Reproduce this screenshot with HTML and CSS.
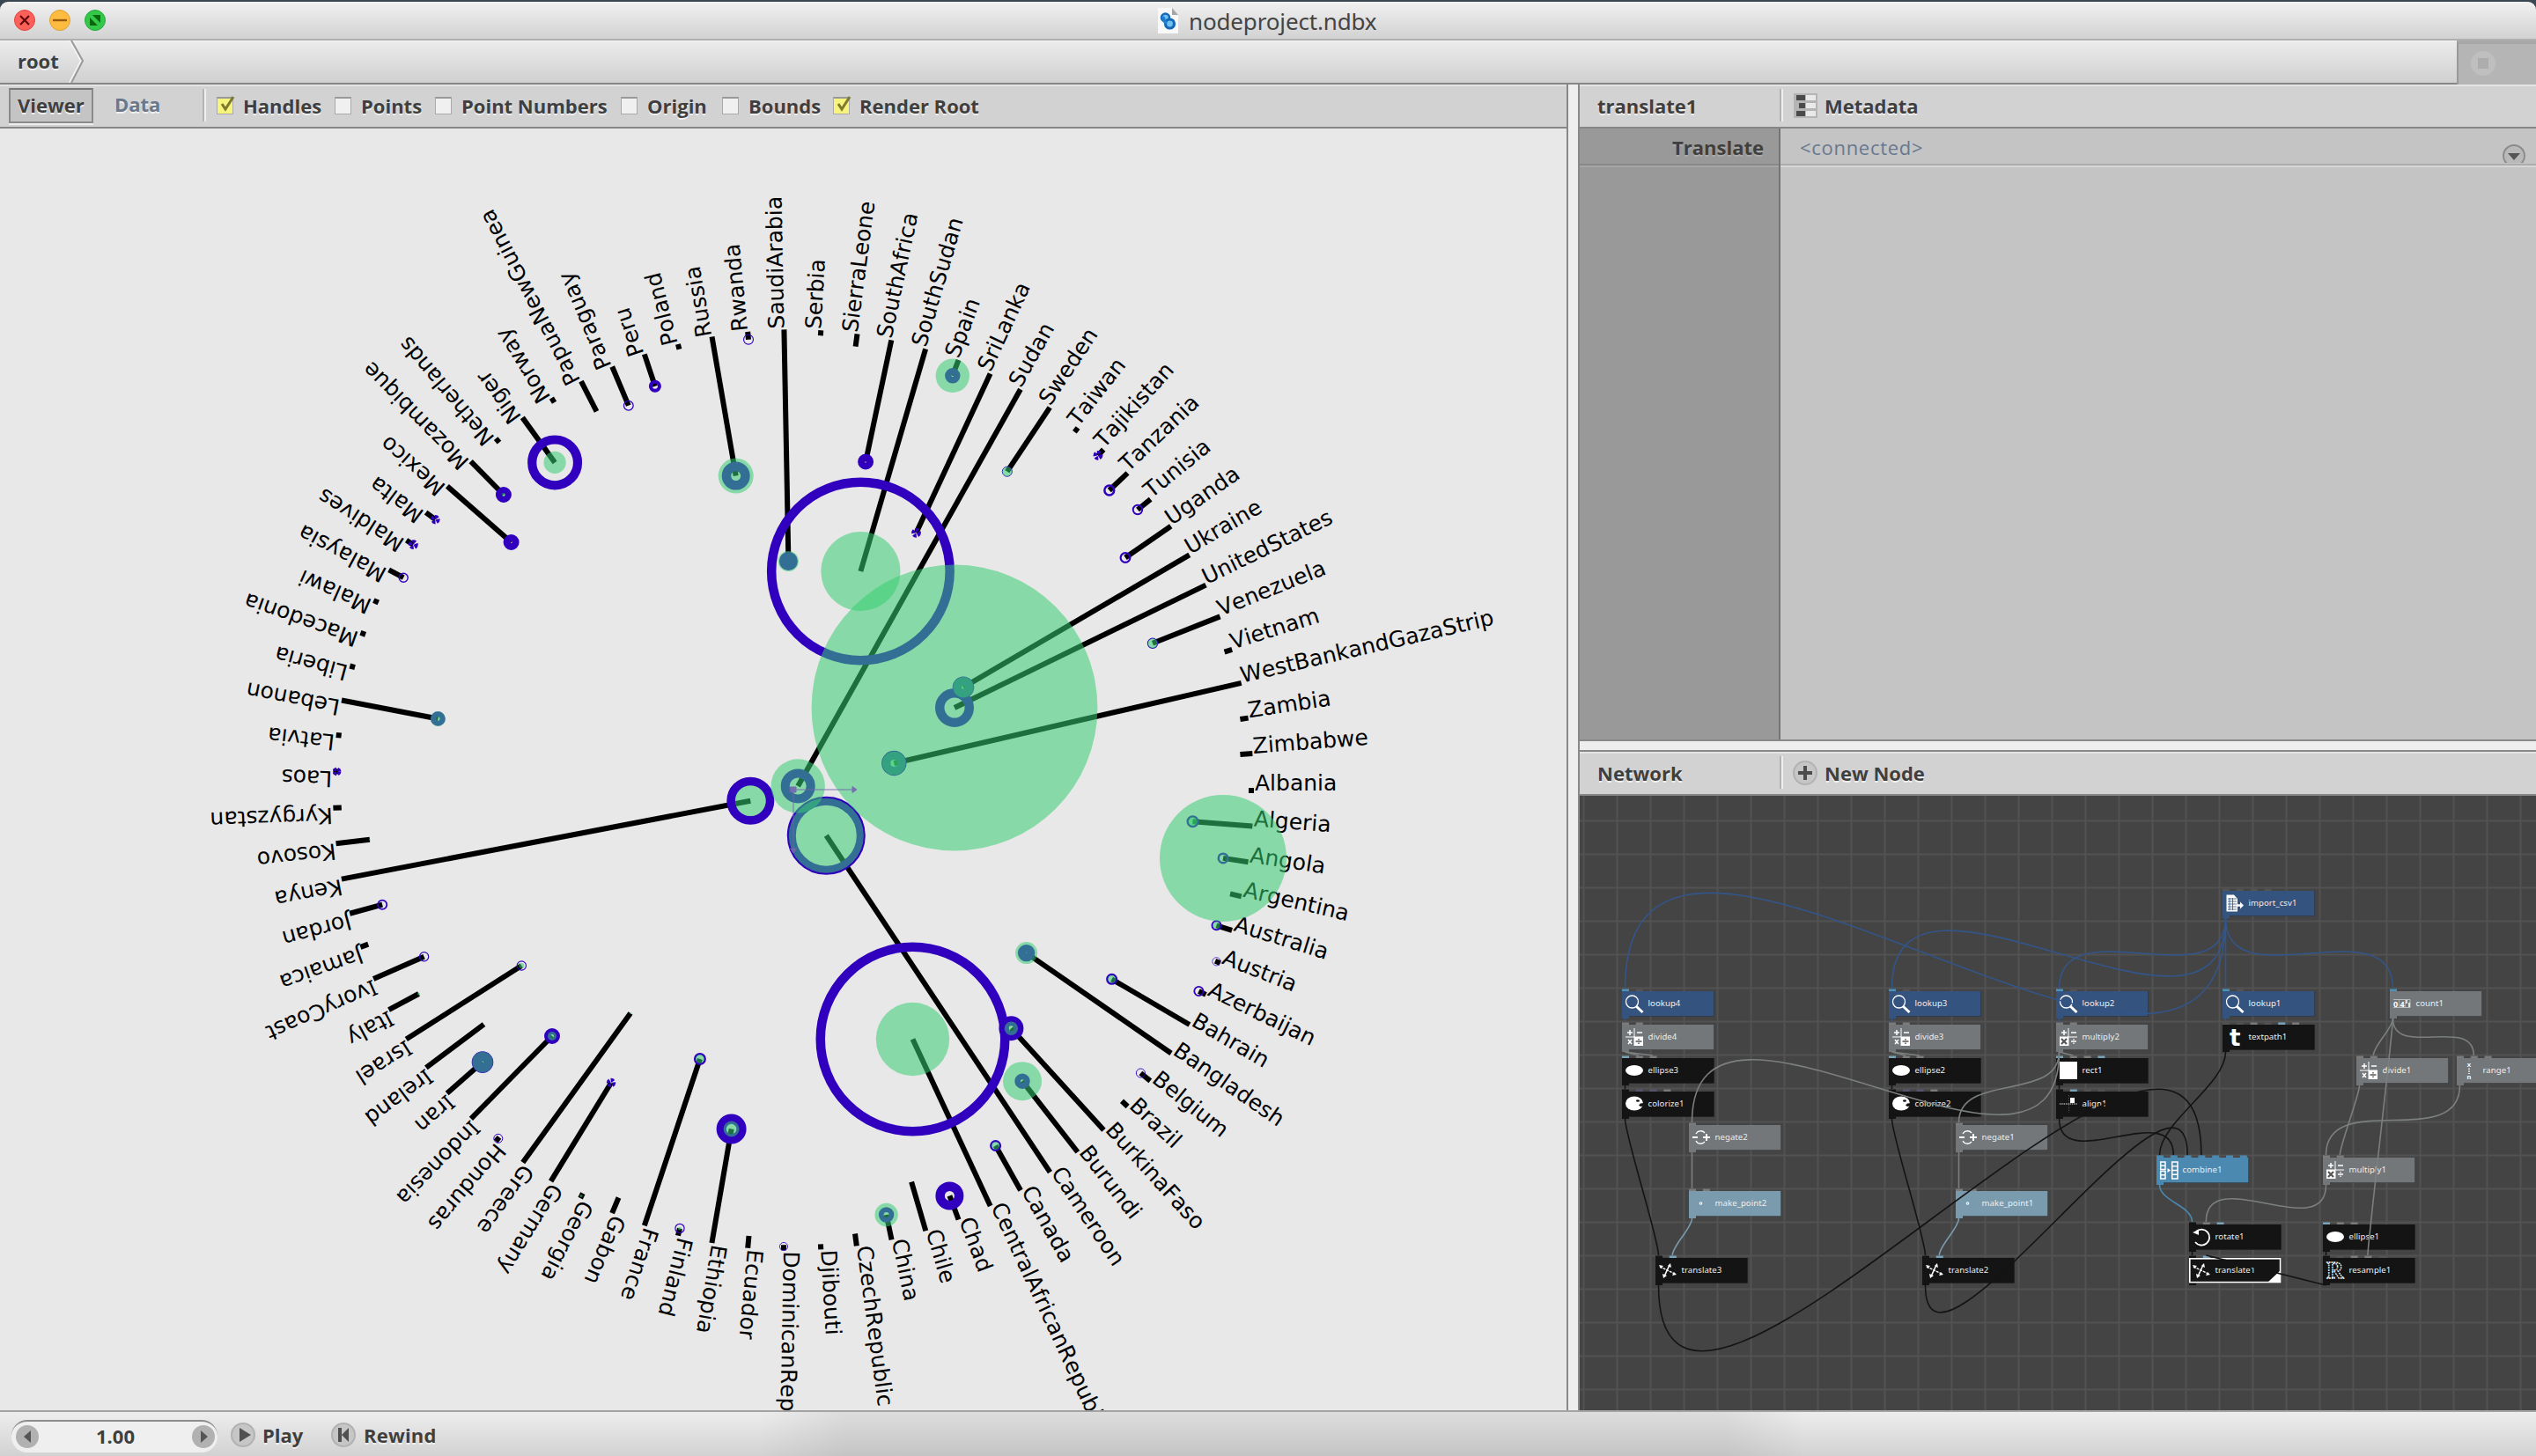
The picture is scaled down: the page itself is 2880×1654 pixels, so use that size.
FILE: index.html
```html
<!DOCTYPE html>
<html lang="en">
<head>
<meta charset="utf-8">
<title>nodeproject.ndbx</title>
<link rel="stylesheet" href="styles.css">
</head>
<body>
<div class="window">
  <header class="titlebar">
    <div class="lights">
      <svg class="light" viewBox="0 0 24 24"><circle cx="12" cy="12" r="11.5" fill="#fc605b" stroke="#e0443e"/><path d="M7 7L17 17M17 7L7 17" stroke="#5f0a08" stroke-width="2.2"/></svg>
      <svg class="light" viewBox="0 0 24 24"><circle cx="12" cy="12" r="11.5" fill="#fdbc40" stroke="#e0a030"/><path d="M4 12H20" stroke="#9a5a0c" stroke-width="2.4"/></svg>
      <svg class="light" viewBox="0 0 24 24"><circle cx="12" cy="12" r="11.5" fill="#34c84a" stroke="#25a936"/><path d="M9 6H18V15ZM6 9V18H15Z" fill="#0b650d"/></svg>
    </div>
    <div class="title">
      <svg class="doc-icon" viewBox="0 0 23 29"><path d="M0 0H16L23 8V29H0Z" fill="#f8f8f8"/><path d="M16 0V8H23Z" fill="#a5a5a5"/><circle cx="8.500" cy="11" r="4.500" fill="#6fc2f0" stroke="#1568b8" stroke-width="2.500"/><circle cx="13.500" cy="18" r="5" fill="#6fc2f0" stroke="#1568b8" stroke-width="3.200"/><path d="M5.500 10L9 18" stroke="#1e7fd0" stroke-width="3.500"/></svg>
      <span class="title-text">nodeproject.ndbx</span>
    </div>
  </header>
  <nav class="address">
    <div class="crumbs"><span class="crumb">root</span><svg class="chevron" viewBox="0 0 18 48"><path d="M1 0L14 23L1 48" fill="none" stroke="#f4f4f4" stroke-width="2"/><path d="M3 0L16 23L3 48" fill="none" stroke="#999" stroke-width="2"/></svg></div>
    <div class="progress"><svg viewBox="0 0 28 28"><circle cx="14" cy="14" r="14" fill="#bfbfbf"/><path d="M8 8H20V20H8Z" fill="#adadad"/></svg></div>
  </nav>
  <main class="workspace">
    <section class="viewer">
      <div class="bar">
        <span class="tab on"><span class="t-viewer">Viewer</span></span>
        <span class="tab off">Data</span>
        <span class="rule"></span>
        <label class="check w-handles on"><i><svg viewBox="0 0 20 22"><path d="M5 10L9 16L18 2" fill="none" stroke="#7d7a30" stroke-width="3"/></svg></i><span>Handles</span></label>
        <label class="check w-points"><i></i><span>Points</span></label>
        <label class="check w-numbers"><i></i><span>Point Numbers</span></label>
        <label class="check w-origin"><i></i><span>Origin</span></label>
        <label class="check w-bounds"><i></i><span>Bounds</span></label>
        <label class="check on"><i><svg viewBox="0 0 20 22"><path d="M5 10L9 16L18 2" fill="none" stroke="#7d7a30" stroke-width="3"/></svg></i><span>Render Root</span></label>
      </div>
      <svg class="chart" id="chart" viewBox="0 146 1779 1456"></svg>
    </section>
    <div class="split-v"></div>
    <section class="side">
      <div class="bar">
        <span class="pane-name">translate1</span><span class="rule"></span>
        <svg class="meta-icon" viewBox="0 0 27 28"><path d="M0 0H27V28H0Z" fill="#b4b4b4"/><path d="M3 2H13V8H3ZM6 11H13V17H6ZM3 20H13V26H3Z" fill="#4a4a4a"/><path d="M14 2H25V8H14ZM14 11H25V17H14ZM14 20H25V26H14Z" fill="#e9e9e9"/></svg>
        <span class="meta">Metadata</span>
      </div>
      <div class="params">
        <div class="names"><div class="pname">Translate</div></div>
        <div class="values"><div class="pvalue"><span>&lt;connected&gt;</span><svg class="drop" viewBox="0 0 28 22"><circle cx="14" cy="14" r="12" fill="#b9b9b9" stroke="#8b8b8b" stroke-width="2"/><path d="M7 11H21L14 19Z" fill="#555"/></svg></div></div>
      </div>
      <div class="split-h"></div>
      <div class="bar net-bar">
        <span class="pane-name">Network</span><span class="rule"></span>
        <svg class="plus" viewBox="0 0 28 28"><circle cx="14" cy="14" r="13" fill="#c6c6c6" stroke="#b2b2b2" stroke-width="2"/><path d="M6 14H22M14 6V22" stroke="#4c4c4c" stroke-width="4"/></svg>
        <span class="meta">New Node</span>
      </div>
      <svg class="network" id="network" viewBox="1794 904 1086 698"></svg>
    </section>
  </main>
  <footer class="animbar">
    <div class="frame">
      <svg class="arrow" viewBox="0 0 26 26"><circle cx="13" cy="13" r="13" fill="#b1b1b1"/><path d="M17 6V20L9 13Z" fill="#555"/></svg>
      <span class="frame-no">1.00</span>
      <svg class="arrow" viewBox="0 0 26 26"><circle cx="13" cy="13" r="13" fill="#b1b1b1"/><path d="M10 6V20L18 13Z" fill="#555"/></svg>
    </div>
    <svg class="ctl" viewBox="0 0 28 28"><circle cx="14" cy="14" r="13" fill="#c6c6c6" stroke="#b2b2b2" stroke-width="2"/><path d="M10 6V22L23 14Z" fill="#505050"/></svg><span class="play">Play</span>
    <svg class="ctl" viewBox="0 0 28 28"><circle cx="14" cy="14" r="13" fill="#c6c6c6" stroke="#b2b2b2" stroke-width="2"/><path d="M8 6H12V22H8ZM20 6V22L12 14Z" fill="#505050"/></svg><span class="rewind">Rewind</span>
  </footer>
</div>
<script src="app.js"></script>
</body>
</html>
```
FILE: styles.css
```css
* { box-sizing: border-box; }
body { margin: 0; background: #3a4750; font-family: "Open Sans", "Noto Sans", sans-serif; }
.window { width: 2880px; height: 1654px; padding-top: 2px; display: flex; flex-direction: column; }
.titlebar { height: 44px; flex: none; display: flex; align-items: center; border-radius: 9px 9px 0 0; background: linear-gradient(#f1f1f1, #d2d2d2); border-bottom: 2px solid #b0b0b0; }
.lights { display: flex; gap: 16px; padding-left: 16px; width: 1315px; }
.light { width: 24px; height: 24px; display: block; }
.title { display: flex; align-items: center; gap: 12px; }
.doc-icon { width: 23px; height: 29px; }
.title-text { font: 26px/30px "Noto Sans", sans-serif; color: #444; letter-spacing: -0.15px; padding-top: 1px; }

.address { height: 50px; flex: none; display: flex; }
.crumbs { width: 2790px; display: flex; align-items: center; padding-left: 20px; background: linear-gradient(#ececec, #d0d0d0); border-bottom: 2px solid #868686; box-shadow: inset 0 2px #efefef; }
.crumb, .bar, .pname, .animbar { font-weight: 700; font-size: 22px; color: #3f3f3f; text-shadow: 0 2px #efefef; }
.crumb { width: 58px; padding-bottom: 2px; }
.chevron { width: 18px; height: 48px; }
.progress { flex: 1; background: #b5b5b5; border-left: 2px solid #999; border-top: 4px solid #a8a8a8; padding: 8px 0 0 14px; }
.progress svg { width: 28px; height: 28px; display: block; }

.workspace { height: 1506px; flex: none; display: flex; }
.viewer { width: 1779px; }
.bar { height: 50px; display: flex; align-items: center; background: #d2d2d2; border-top: 2px solid #e4e4e4; border-bottom: 2px solid #868686; padding-bottom: 3px; white-space: nowrap; }
.tab { height: 40px; line-height: 37px; }
.tab.on { margin-left: 10px; width: 96px; padding-left: 8px; background: #c4c4c4; border: 2px solid #8b8b8b; border-top-color: #777; box-shadow: 0 2px #eee; line-height: 35px; }
.tab.off { width: 100px; margin-left: 24px; color: #6a7889; }
.rule { width: 4px; height: 37px; background: #b4b4b4; border-right: 2px solid #efefef; }
.check { display: flex; align-items: center; gap: 11px; }
.check i { width: 19px; height: 20px; background: #f0f0f0; border: 1px solid #aaa; border-top: 2px solid #999; display: block; }
.check.on i { background: #f6f47c; }
.check svg { display: block; width: 20px; height: 22px; margin-top: -4px; }
.rule + .check { margin-left: 12px; }
.w-handles { width: 134px; }
.w-points { width: 114px; }
.w-numbers { width: 211px; }
.w-origin { width: 115px; }
.w-bounds { width: 126px; }
.chart { display: block; width: 1779px; height: 1456px; background: #e8e8e8; }

.split-v { width: 15px; background: #eee; border-left: 2px solid #888; border-right: 2px solid #888; }
.side { width: 1086px; }
.pane-name { width: 227px; padding-left: 20px; }
.meta-icon { width: 27px; height: 28px; margin-left: 12px; }
.meta { margin-left: 8px; }
.params { height: 694px; display: flex; }
.names { width: 228px; background: #999; border-right: 2px solid #757575; }
.pname { height: 44px; line-height: 42px; text-align: right; padding-right: 17px; border-bottom: 2px solid #a6a6a6; box-shadow: inset 0 -2px #888; text-shadow: 0 2px #aaa; }
.values { flex: 1; background: #c4c4c4; }
.pvalue { height: 44px; display: flex; justify-content: space-between; padding: 0 11px 0 22px; border-bottom: 2px solid #d6d6d6; box-shadow: inset 0 -2px #adadad; font-size: 22px; line-height: 42px; color: #687890; letter-spacing: 0.7px; }
.drop { width: 28px; height: 22px; margin-top: 17px; }
.split-h { height: 14px; background: #eee; border-top: 2px solid #888; border-bottom: 2px solid #888; }
.plus { width: 28px; height: 28px; margin-left: 11px; }
.network { display: block; width: 1086px; height: 698px; background: #444; }

.animbar { height: 52px; flex: none; display: flex; align-items: center; border-top: 2px solid #a3a3a3; background: linear-gradient(90deg, #0000 860px, #0001 960px, #0001 1960px, #0000 2050px), linear-gradient(#ededed, #d2d2d2); padding-top: 2px; }
.frame { margin: 2px 0 0 13px; width: 234px; height: 37px; display: flex; align-items: center; justify-content: space-between; padding: 0 3px 0 5px; border-radius: 18px; border-top: 2px solid #8d8d8d; background: #efefef; }
.frame-no { margin-top: -3px; }
.arrow { width: 26px; height: 26px; }
.ctl { width: 28px; height: 28px; margin-left: 15px; }
.play { width: 78px; margin-left: 8px; }
.rewind { margin-left: 9px; letter-spacing: 0.2px; }
.play + .ctl { margin-left: 0; }

.country { font: 25px "DejaVu Sans", sans-serif; font-kerning: none; }
.serif-i { font-family: "Noto Sans", sans-serif; }
.node-name { font: 9.6px "Noto Sans", sans-serif; letter-spacing: 0.05px; fill: #eee; }
.digits { font: 700 9px "Open Sans", sans-serif; fill: #fff; }
.letter { font: 700 26px "DejaVu Sans", sans-serif; fill: #fff; }
.outline { font: 700 27px "Liberation Serif", serif; fill: #141414; stroke: #fff; stroke-width: 1.3; stroke-dasharray: 1.8 1; }
.tiny { font: 700 8px "Liberation Mono", monospace; fill: #fff; }
```
FILE: app.js
```js
// Radial chart: name, line end x, y, ring outer radius, ring hole radius, disc radius.
const countries = [
["Albania",1418,898],["Algeria",1354.5,933.3,7,4.5,5],["Angola",1389,974.9,6.5,4,72],["Argentina",1397,1015.4],
["Australia",1381.5,1051.3,6,4,4],["Austria",1381.5,1092.3,5,4.3],["Azerbaijan",1361.4,1126,6,4.2],
["Bahrain",1262.6,1112.3,6.5,4,4.5],["Bangladesh",1165.6,1082.6,9.7,.6,12.5],["Belgium",1295.4,1219,5.5,4.6],
["Brazil",1274,1250.8],["BurkinaFaso",1148.4,1168.2,14,3,7.7],["Burundi",1161,1228.2,8.7,2,22],
["Cameroon",938.3,949.2,44.5,34.5,42.5],["Canada",1130.6,1301.5,6.5,4,4.5],
["CentralAfricanRepublic",1036.5,1180.5,110,99.5,41.7],["Chad",1078.4,1358.4,16,5.5],["Chile",1035.3,1342.6],
["China",1006.6,1380,8.7,3,13.2],["CzechRepublic",971,1401.5],["Djibouti",932,1415],
["DominicanRepublic",890,1416,5,4.2],["Ecuador",850.5,1404],["Ethiopia",830.6,1282.5,17,5.8,9],
["Finland",772,1395.4,5.7,4.5,2],["France",794.9,1203,7,4.5,5],["Gabon",702.5,1360.5],["Georgia",660,1358.4,0,0,1.5],
["Germany",694,1230,5.5,0,1,1],["Greece",716,1151,0,0,1],["Honduras",565.8,1293.3,5.5,4.5],
["Indonesia",627,1177,9,2,5],["Iran",548,1206.6,12.3,1.2,11.8],["Ireland",549.5,1163.6],
["Israel",592.3,1097,5.7,4.6,3],["Italy",475.5,1129,0,0,1.5],["IvoryCoast",481.6,1086.7,5.7,4.5],
["Jamaica",418.4,1073.3],["Jordan",434.2,1027.7,6,4.2],["Kenya",852.3,909.7,27,17.3,17.5],
["Kosovo",419.9,953.8,0,0,1],["Kyrgyzstan",387.8,917.4],["Laos",382.6,876.4,5,0,0,1],["Latvia",386,835.4],
["Lebanon",497.4,816.5,8.3,2.2,8.6],["Liberia",402,756.7],["Macedonia",413.3,719.6],["Malawi",428.6,683.5],
["Malaysia",458.2,656.2,5.7,4.3],["Maldives",469.4,618.7,5.7,0,0,1],["Malta",494.4,590.2,5.5,0,0,1],
["Mexico",580.6,616,9,1],["Mozambique",571.9,562,9,1.5,2],["Netherlands",564.3,499.5],
["Niger",630.1,525.4,31,20.8,12.6],["Norway",627.5,454],["PapuaNewGuinea",677.5,467.4],
["Paraguay",713.8,460.7,6,4.7],["Peru",743.9,438.8,7,3],["Poland",770.4,392.8],["Russia",835.7,540.6,16,5.5,20],
["Rwanda",850,385.7,6,4.9],["SaudiArabia",895.4,637.5,10.5,0,11.6],["Serbia",932,379],
["SierraLeone",971.6,393.7],["SouthAfrica",983.1,524.5,9,1],["SouthSudan",977.4,649,106.5,96,45],
["Spain",1081.8,426.8,8.7,1.3,19.2],["SriLanka",1040.5,605.3,5.7,0,0,1],["Sudan",906.2,893,19.5,9.5,30.7],
["Sweden",1143.8,535.7,6,5,5.5],["Taiwan",1222.5,488],["Tajikistan",1247,517.4,5.7,0,0,1],
["Tanzania",1259.8,557,6.7,4.2],["Tunisia",1292,579,6.2,4.3],["Uganda",1278,633.5,6.5,4.3],
["Ukraine",1094,780.8,12.3,2,11.6],["UnitedStates",1084,804,22,11.5,162.4],["Venezuela",1309,730.8,6.2,5,5.5],
["Vietnam",1390.6,740.6],["WestBankandGazaStrip",1015.3,867,14.2,4,13.3],["Zambia",1408.4,817],["Zimbabwe",1408.4,857]];
const cx = 901, cy = 897.3, r0 = 523;
let labels = "", bars = "", rings = "", discs = "";
countries.forEach(([name, x, y, outer = 0, hole = 0, disc = 0, star = 0], i) => {
  const deg = i * 360 / countries.length, a = deg * Math.PI / 180;
  const px = x - cx, py = y - cy;
  const len = px * Math.cos(a) + py * Math.sin(a);
  // Each spoke runs parallel to its radius, through the point that it ends at.
  const side = Math.max(-4, Math.min(4, py * Math.cos(a) - px * Math.sin(a)));
  const text = name.replace(/^I/, '<tspan class="serif-i">I</tspan>');
  labels += `<text class="country" x="${r0 + 1}" y="${side}" transform="rotate(${deg})">${text}</text>`;
  const end = Math.min(len, r0 - 6);
  bars += `<rect x="${end}" y="${side - 3}" width="${r0 - end}" height="6" transform="rotate(${deg})"/>`;
  if (star) rings += `<circle cx="${px}" cy="${py}" r="${outer * .55}" fill="none" stroke="#3000be" stroke-width="${outer * .8}" stroke-dasharray="3.2 1.3"/>`;
  else if (outer) rings += `<circle cx="${px}" cy="${py}" r="${(outer + hole) / 2}" fill="none" stroke="#3000be" stroke-width="${outer - hole}"/>`;
  if (disc) discs += `<circle cx="${px}" cy="${py}" r="${disc}" fill="#35ce70" fill-opacity=".543"/>`;
});
document.getElementById("chart").innerHTML =
  `<g transform="translate(${cx} ${cy})">${labels}${bars}${rings}${discs}</g>
  <g fill="#7565b0" stroke="#7565b0" opacity=".9"><path d="M897 894H904V900H897Z"/><path d="M901 897H970M901 897V966" fill="none"/><path d="M968 893.500L973 897L968 900.500Z"/><path d="M897.500 964L901 969L904.500 964Z"/></g>`;

// Node network
const colors = { blue: "#34547f", grey: "#737779", black: "#141414", sky: "#7a9bae", cyan: "#4b89b0" };
const wires = { blue: "#335588", grey: "#7b7f80", black: "#141414", sky: "#7a9bae", cyan: "#4b89b0" };
const port = { s: "#78a3b8", c: "#4d93b8", g: "#7b7b7b", d: "#555352", p: "#5b5370", k: "#141414", b: "#4b89b0" };
const calc = (op) => `<path d="M10 0V20M0 10H20" stroke="#fff"/><path d="M2 5H8M5 2V8M13 5H19" stroke="#fff" stroke-width="1.500"/>` +
  (op === "div"
    ? `<path d="M3 13L7 18M7 13L3 18" stroke="#fff" stroke-width="1.500"/><path d="M10 10H20V20H10Z" fill="#fff"/><path d="M11.500 15H18.500M15 12V13.500M15 16.500V18" stroke="#555" stroke-width="1.500"/>`
    : `<path d="M0 10H10V20H0Z" fill="#fff"/><path d="M2 12L8 18M8 12L2 18" stroke="#555" stroke-width="2.200"/><path d="M13 15H19M16 12V13.500M16 16.500V18" stroke="#fff" stroke-width="1.300"/>`);
const icons = {
  lookup: `<circle cx="7.500" cy="8" r="7" fill="none" stroke="#fff" stroke-width="1.300"/><path d="M12 13L19.500 20" stroke="#fff" stroke-width="3"/>`,
  div: calc("div"), mul: calc("mul"),
  ellipse: `<ellipse cx="10" cy="10" rx="10" ry="6" fill="#fff"/>`,
  colorize: `<ellipse cx="10" cy="9.500" rx="10" ry="8" fill="#fff"/><path d="M21 9L17 9.500L15 11.500L17 13L21 12.500Z" fill="#141414"/><ellipse cx="14" cy="6.500" rx="2" ry="1.300" fill="#141414"/>`,
  csv: `<path d="M.5 .5H9L13 5V19.500H.5Z" fill="#fff"/><path d="M2 5H12M2 8H12M2 11H12M2 14H12M2 17H12M4 4V18M7.500 4V18" stroke="#34547f" stroke-width=".8"/><path d="M12 12.500H17" stroke="#fff" stroke-width="2.500"/><path d="M16 8.500L20 12.500L16 16.500Z" fill="#fff"/>`,
  text: `<text class="letter" x="4" y="20">t</text>`,
  rect: `<path d="M0 0H20V20H0Z" fill="#fff"/>`,
  align: `<path d="M0 10H20" stroke="#fff" stroke-dasharray="1.300 1"/><path d="M10.500 0V20" stroke="#555" stroke-dasharray="1.300 1.500"/><path d="M12 3H17V9H12Z" fill="#fff"/>`,
  negate: `<path d="M0 10H6M12 10H20M16 6V14" stroke="#fff" stroke-width="2"/><path d="M4 6A6 6 0 0 1 14 5M4 14A6 6 0 0 0 14 15" fill="none" stroke="#fff" stroke-width="1.300"/>`,
  point: `<circle cx="9.500" cy="10" r="1.800" fill="#fff"/><circle cx="9.500" cy="10" r=".8" fill="#7a9bae"/>`,
  translate: `<path d="M1 6L19 14.500" stroke="#fff" stroke-width="1.400" stroke-dasharray="3 1"/><path d="M6 17L12 4" stroke="#fff" stroke-width="1.600"/><path d="M0 4L5 5L2 8ZM20 15L15 16L17 12ZM13 2L14 7L10 5ZM5 19L4 14L9 16Z" fill="#fff"/>`,
  rotate: `<path d="M4 4A9 9 0 1 1 3 16" fill="none" stroke="#fff" stroke-width="1.800"/><path d="M0 5L7 2V8Z" fill="#fff"/>`,
  resample: `<text class="outline" x="0" y="19">R</text>`,
  combine: `<path d="M.700 1H6V9.500H.700ZM.700 11.500H6V20H.700ZM.700 5.200H6M.700 15.700H6M13.700 1H20V20H13.700ZM13.700 5.700H20M13.700 10.500H20M13.700 15.200H20" fill="none" stroke="#fff" stroke-width="1.500"/><path d="M8.500 8L12 10.500L8.500 13Z" fill="#fff"/>`,
  count: `<path d="M0 5.500H19V14.500H0" fill="none" stroke="#ccc" stroke-width=".8"/><path d="M6.500 5V15M13.500 5V15" stroke="#bbb" stroke-width=".7"/><text class="digits" x="0" y="13.500">0</text><text class="digits" x="7.500" y="13.500">4</text><path d="M15 6V10M18 9V14" stroke="#fff" stroke-width="1.500"/>`,
  range: `<text class="tiny" x="7.500" y="6">x</text><path d="M10 7.500V14" stroke="#fff" stroke-width="1.500" stroke-dasharray="1.500 1.200"/><text class="tiny" x="7.500" y="20">n</text>`
};
// name: x, y, colour, icon, input ports
const nodes = {
  import_csv1: [2524, 1012, "blue", "csv", "dddd"],
  lookup4: [1842, 1126, "blue", "lookup", "cd"], lookup3: [2145, 1126, "blue", "lookup", "cd"],
  lookup2: [2335, 1126, "blue", "lookup", "cd"], lookup1: [2524, 1126, "blue", "lookup", "cd"],
  count1: [2714, 1126, "grey", "count", "c"],
  divide4: [1842, 1164, "grey", "div", "gg"], divide3: [2145, 1164, "grey", "div", "gg"],
  multiply2: [2335, 1164, "grey", "mul", "gg"], textpath1: [2524, 1164, "black", "text", "ddgdsg"],
  ellipse3: [1842, 1202, "black", "ellipse", "sgg"], ellipse2: [2145, 1202, "black", "ellipse", "sgg"],
  rect1: [2335, 1202, "black", "rect", "sggs"], divide1: [2676, 1202, "grey", "div", "gg"],
  range1: [2790, 1202, "grey", "range", "ggg"],
  colorize1: [1842, 1240, "black", "colorize", "kppg"], colorize2: [2145, 1240, "black", "colorize", "kppg"],
  align1: [2335, 1240, "black", "align", "ksdd"],
  negate2: [1918, 1278, "grey", "negate", "g"], negate1: [2221, 1278, "grey", "negate", "g"],
  combine1: [2449, 1315, "cyan", "combine", "bbbbbbb"], multiply1: [2638, 1315, "grey", "mul", "gg"],
  make_point2: [1918, 1353, "sky", "point", "gg"], make_point1: [2221, 1353, "sky", "point", "gg"],
  rotate1: [2486, 1391, "black", "rotate", "kgs"], ellipse1: [2638, 1391, "black", "ellipse", "sgg"],
  translate3: [1880, 1429, "black", "translate", "ks"], translate2: [2183, 1429, "black", "translate", "ks"],
  translate1: [2486, 1429, "black", "translate", "ks"], resample1: [2638, 1429, "black", "resample", "kdggd"]
};
const links = `import_csv1>lookup4:0 import_csv1>lookup3:0 import_csv1>lookup2:0 import_csv1>lookup1:0 import_csv1>count1:0
lookup4>divide4:0 divide4>ellipse3:1 divide4>ellipse3:2 ellipse3>colorize1:0 colorize1>translate3:0
lookup3>divide3:0 divide3>ellipse2:1 divide3>ellipse2:2 ellipse2>colorize2:0 colorize2>translate2:0
lookup2>multiply2:0 multiply2>rect1:1 rect1>align1:0 align1>combine1:1 multiply2>negate2:0 multiply2>negate1:0
negate2>make_point2:0 negate1>make_point1:0 make_point2>translate3:1 make_point1>translate2:1
lookup1>textpath1:0 textpath1>combine1:0 translate3>combine1:3 translate2>combine1:2
count1>divide1:1 count1>range1:1 count1>resample1:3 divide1>multiply1:1 range1>multiply1:0
multiply1>rotate1:1 combine1>rotate1:0 rotate1>translate1:0 ellipse1>resample1:0 resample1>translate1:1`.split(/\s+/);
let out = "";
for (let x = 1798.5; x < 2880; x += 38) out += `<path d="M${x} 904V1602" stroke="#525252" stroke-width="2"/>`;
for (let y = 932.5; y < 1602; y += 38) out += `<path d="M1794 ${y}H2880" stroke="#525252" stroke-width="2"/>`;
for (const [name, [x, y, color, icon, ports]] of Object.entries(nodes)) {
  [...ports].forEach((p, i) => { out += `<rect x="${x + i * 15.8}" y="${y - 2.5}" width="8" height="2.500" fill="${port[p]}"/>`; });
  out += `<rect x="${x}" y="${y + 28}" width="8" height="3" fill="${colors[color]}"/>
  <rect x="${x}" y="${y}" width="104.500" height="28.500" fill="${colors[color]}"/><path d="M${x + 8} ${y + 28.5}H${x + 104.5}V${y}" fill="none" stroke="#0003"/>`;
  if (name === "translate1") out += `<rect x="${x + .8}" y="${y + .8}" width="102.800" height="26.800" fill="none" stroke="#fff" stroke-width="1.600"/><path d="M${x + 104} ${y + 14}V${y + 28}H${x + 89}Z" fill="#fff"/>`;
  out += `<g transform="translate(${x + 4} ${y + 4})">${icons[icon]}</g>
  <text class="node-name" x="${x + 29.5}" y="${y + 17.3}">${name}</text>`;
}
links.forEach(link => {
  const [from, rest] = link.split(">"), [to, index] = rest.split(":");
  const a = nodes[from], b = nodes[to];
  const x0 = a[0] + 3.5, y0 = a[1] + 31, x1 = b[0] + 3.5 + index * 15.8, y1 = b[1] - 3;
  const h = Math.abs(x1 - x0) / 2;
  const d = Math.abs(y1 - y0) < 38 ? `M${x0} ${y0}L${x1} ${y1}` : `M${x0} ${y0}C${x0} ${y0 + h} ${x1} ${y1 - h} ${x1} ${y1}`;
  out += `<path d="${d}" fill="none" stroke="${wires[a[2]]}" stroke-width="1.600"/>`;
});
document.getElementById("network").innerHTML = out;
```
